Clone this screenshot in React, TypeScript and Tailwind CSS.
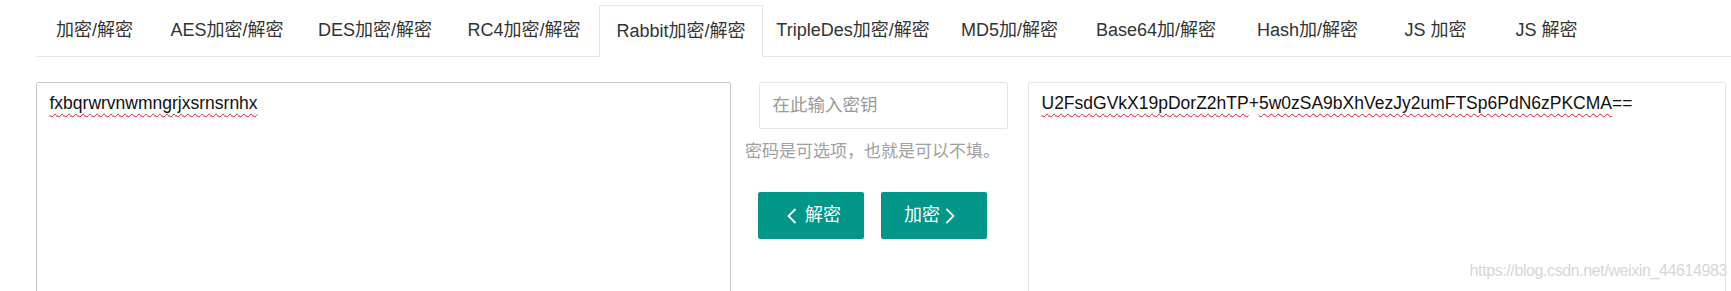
const tabs: { label: string; w: string }[] = [
  { label: '加密/解密', w: 'w-[117px]' },
  { label: 'AES加密/解密', w: 'w-[148px]' },
  { label: 'DES加密/解密', w: 'w-[148px]' },
  { label: 'RC4加密/解密', w: 'w-[150px]' },
  { label: 'Rabbit加密/解密', w: 'w-[164px]' },
  { label: 'TripleDes加密/解密', w: 'w-[180px]' },
  { label: 'MD5加/解密', w: 'w-[133px]' },
  { label: 'Base64加/解密', w: 'w-[160px]' },
  { label: 'Hash加/解密', w: 'w-[143px]' },
  { label: 'JS 加密', w: 'w-[113px]' },
  { label: 'JS 解密', w: 'w-[109px]' },
];

const ACTIVE = 4;

function Chevron({ dir }: { dir: 'left' | 'right' }) {
  return (
    <svg width="10" height="16" viewBox="0 0 10 16" fill="none" stroke="white" strokeWidth="1.8">
      {dir === 'left' ? <polyline points="8.5,1 1.5,8 8.5,15" /> : <polyline points="1.5,1 8.5,8 1.5,15" />}
    </svg>
  );
}

const squiggle = 'underline decoration-wavy decoration-[#e81123] decoration-1 underline-offset-[4px]';

export default function App() {
  return (
    <div className="relative h-[291px] w-full overflow-hidden bg-white font-['Liberation_Sans','Noto_Sans_CJK_SC',sans-serif] text-[17.5px] text-[#333]">
      {/* Tab titles */}
      <div className="pl-[36px] pt-[5px]">
        <ul className="flex h-[52px] border-b border-[#e6e6e6] text-[18px]">
          {tabs.map((t, i) =>
            i === ACTIVE ? (
              <li
                key={t.label}
                className={`-mb-px flex h-[52px] ${t.w} items-center justify-center whitespace-pre rounded-t-[2px] border border-[#e6e6e6] border-b-white bg-white`}
              >
                {t.label}
              </li>
            ) : (
              <li key={t.label} className={`flex h-[51px] ${t.w} items-center justify-center whitespace-pre`}>
                {t.label}
              </li>
            )
          )}
        </ul>
      </div>

      {/* Content */}
      <div className="mt-[25px] flex pl-[36px]">
        <div className="h-[260px] w-[695px] shrink-0 rounded-[2px] border border-[#c9c9c9] px-[12.5px] py-[7.5px] leading-[25px] text-[#111]">
          <span className={squiggle}>fxbqrwrvnwmngrjxsrnsrnhx</span>
        </div>

        <div className="flex w-[297px] shrink-0 flex-col">
          <div className="ml-[28px] flex h-[47px] w-[249px] items-center rounded-[2px] border border-[#e6e6e6] px-[12.5px] text-[#999]">
            在此输入密钥
          </div>
          <p className="ml-[14px] mt-[10px] whitespace-nowrap text-[17px] leading-[25px] text-[#a0a0a0]">
            密码是可选项，也就是可以不填。
          </p>
          <div className="ml-[27px] mt-[28px] flex gap-[17px] text-[18px]">
            <button className="flex h-[47px] w-[106px] items-center rounded-[2px] bg-[#009688] pl-[29px] text-white">
              <Chevron dir="left" />
              <span className="ml-[8px]">解密</span>
            </button>
            <button className="flex h-[47px] w-[106px] items-center rounded-[2px] bg-[#009688] pl-[23px] text-white">
              <span className="mr-[5px]">加密</span>
              <Chevron dir="right" />
            </button>
          </div>
        </div>

        <div className="h-[260px] w-[698px] shrink-0 rounded-[2px] border border-[#e6e6e6] px-[12.5px] py-[7.5px] leading-[25px] text-[#111]">
          <span className={squiggle}>U2FsdGVkX19pDorZ2hTP</span>+<span className={squiggle}>5w0zSA9bXhVezJy2umFTSp6PdN6zPKCMA</span>==
        </div>
      </div>

      {/* Watermark */}
      <div className="absolute right-[4px] top-[259px] text-[16px] tracking-[-0.4px] text-[#d6d6d6] [text-shadow:0_0_1px_#fff]">
        https://blog.csdn.net/weixin_44614983
      </div>
    </div>
  );
}
